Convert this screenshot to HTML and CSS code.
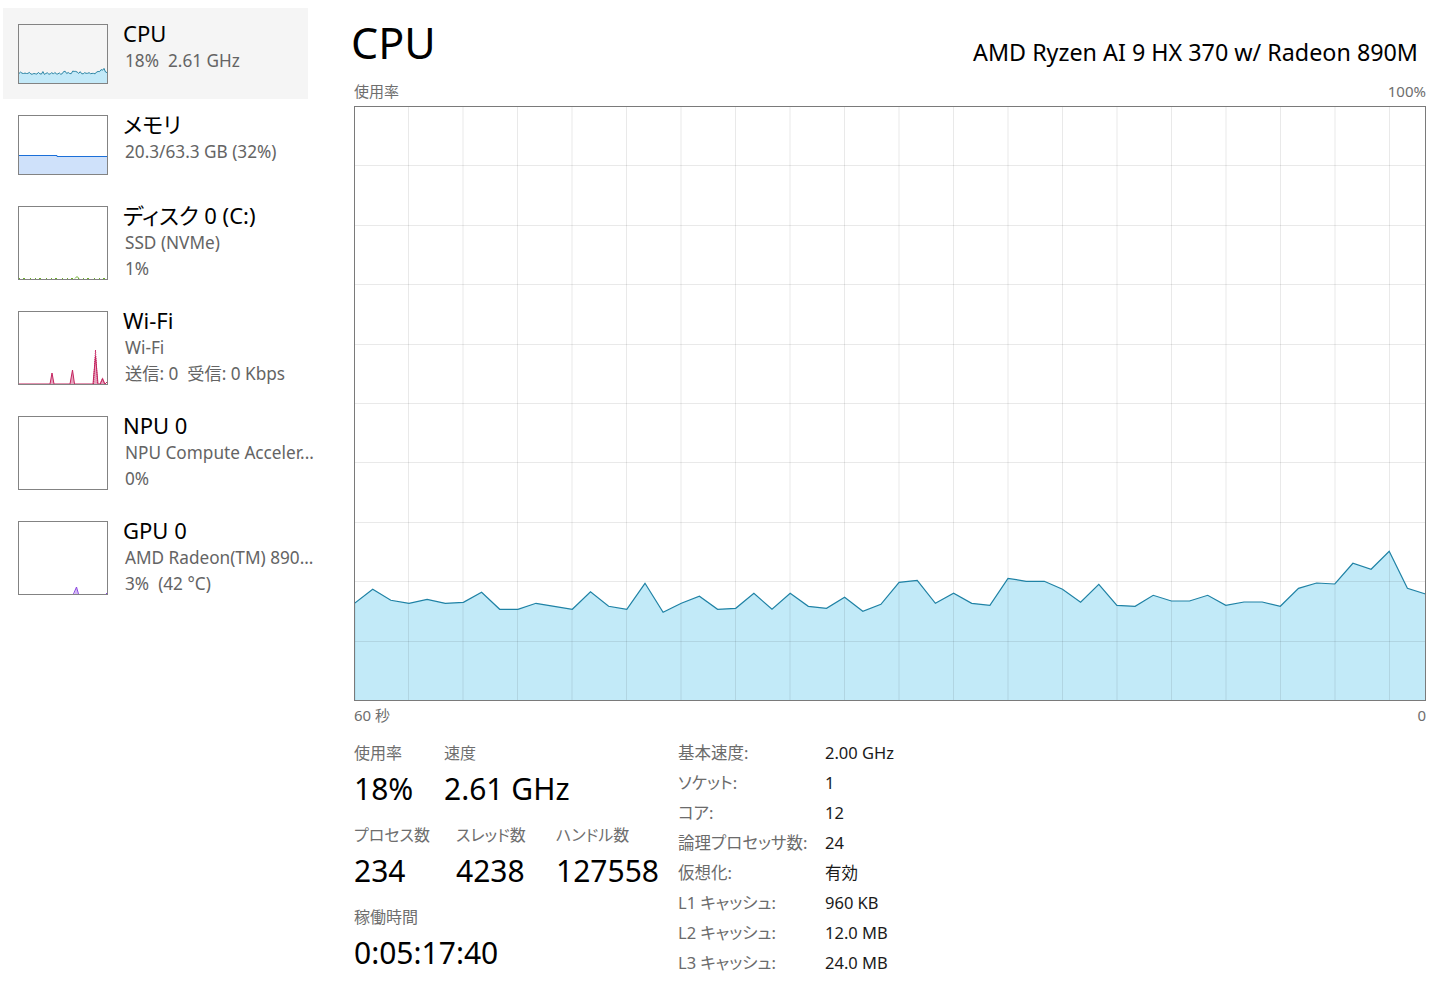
FILE: index.html
```html
<!DOCTYPE html>
<html lang="ja">
<head>
<meta charset="utf-8">
<title>タスク マネージャー - CPU</title>
<link rel="stylesheet" href="styles.css">
</head>
<body>
<div class="app">
  <aside class="sidebar">
    <div class="item selected">
      <svg class="thumb" width="90" height="60" viewBox="0 0 90 60">
        <polygon class="cpu-fill" points="1,49.5 2.5,48.1 4,49.2 5.5,49.5 7,49.1 8.5,49.5 9.9,49.4 11.4,48.4 12.9,50.1 14.4,50.1 15.9,49.5 17.4,49.8 18.9,50.1 20.4,48.4 21.9,49.8 23.4,50.1 24.9,47.6 26.4,50.4 27.8,49.5 29.3,48.8 30.8,50.1 32.3,50 33.8,48.5 35.3,50.1 36.8,48.5 38.3,49.8 39.8,50 41.3,48.9 42.8,50.3 44.3,49.6 45.7,47.5 47.2,47.3 48.7,49.5 50.2,48.5 51.7,49.5 53.2,49.7 54.7,47.1 56.2,47.4 57.7,47.4 59.2,48.1 60.7,49.4 62.2,47.7 63.7,49.7 65.2,49.8 66.6,48.7 68.1,49.3 69.6,49.3 71.1,48.7 72.6,49.7 74.1,49.4 75.6,49.4 77.1,49.8 78.6,48 80.1,47.5 81.6,47.6 83.1,45.6 84.6,46.2 86,44.4 87.5,48 89,48.6 89,59 1,59"/>
        <polyline class="cpu-line" points="1,49.5 2.5,48.1 4,49.2 5.5,49.5 7,49.1 8.5,49.5 9.9,49.4 11.4,48.4 12.9,50.1 14.4,50.1 15.9,49.5 17.4,49.8 18.9,50.1 20.4,48.4 21.9,49.8 23.4,50.1 24.9,47.6 26.4,50.4 27.8,49.5 29.3,48.8 30.8,50.1 32.3,50 33.8,48.5 35.3,50.1 36.8,48.5 38.3,49.8 39.8,50 41.3,48.9 42.8,50.3 44.3,49.6 45.7,47.5 47.2,47.3 48.7,49.5 50.2,48.5 51.7,49.5 53.2,49.7 54.7,47.1 56.2,47.4 57.7,47.4 59.2,48.1 60.7,49.4 62.2,47.7 63.7,49.7 65.2,49.8 66.6,48.7 68.1,49.3 69.6,49.3 71.1,48.7 72.6,49.7 74.1,49.4 75.6,49.4 77.1,49.8 78.6,48 80.1,47.5 81.6,47.6 83.1,45.6 84.6,46.2 86,44.4 87.5,48 89,48.6"/>
        <rect class="frame" x="0.5" y="0.5" width="89" height="59"/>
      </svg>
      <div class="info">
        <div class="name">CPU</div>
        <div class="sub"><span class="sp">18%</span>2.61 GHz</div>
      </div>
    </div>

    <div class="item">
      <svg class="thumb" width="90" height="60" viewBox="0 0 90 60">
        <polygon class="mem-fill" points="1,40.5 39,40.5 39,41.5 89,41.5 89,59 1,59"/>
        <polyline class="mem-line" points="1,40.5 39,40.5 39,41.5 89,41.5"/>
        <rect class="frame" x="0.5" y="0.5" width="89" height="59"/>
      </svg>
      <div class="info">
        <div class="name">メモリ</div>
        <div class="sub">20.3/63.3 GB (32%)</div>
      </div>
    </div>

    <div class="item">
      <svg class="thumb" width="90" height="74" viewBox="0 0 90 74">
        <path class="disk-line" d="M1,72.5 H89"/>
        <polyline class="disk-bump" points="57,72.5 59,70.5 61,72.5"/>
        <rect class="frame" x="0.5" y="0.5" width="89" height="73"/>
      </svg>
      <div class="info">
        <div class="name">ディスク 0 (C:)</div>
        <div class="sub">SSD (NVMe)</div>
        <div class="sub">1%</div>
      </div>
    </div>

    <div class="item">
      <svg class="thumb" width="90" height="74" viewBox="0 0 90 74">
        <polygon class="wifi-fill" points="32,73 34,62 36,73"/>
        <polygon class="wifi-fill" points="52,73 54.5,59 56.5,73"/>
        <polygon class="wifi-fill" points="75,73 77.5,39 80,73"/>
        <polygon class="wifi-fill" points="82,73 84.5,66 87,73"/>
        <polyline class="wifi-dash" points="75.5,73 77.5,39 79.5,73"/>
        <polyline class="wifi-dash" points="82.5,73 84.5,67 86.5,73"/>
        <polyline class="wifi-line" points="1,73 32,73 34,62 36,73 52,73 54.5,59 56.5,73 75,73 77.5,45 80,73 82,73 84.5,68 87,73 89,71"/>
        <rect class="frame" x="0.5" y="0.5" width="89" height="73"/>
      </svg>
      <div class="info">
        <div class="name">Wi-Fi</div>
        <div class="sub">Wi-Fi</div>
        <div class="sub"><span class="sp">送信: 0</span>受信: 0 Kbps</div>
      </div>
    </div>

    <div class="item">
      <svg class="thumb" width="90" height="74" viewBox="0 0 90 74">
        <rect class="frame" x="0.5" y="0.5" width="89" height="73"/>
      </svg>
      <div class="info">
        <div class="name">NPU 0</div>
        <div class="sub">NPU Compute Acceler...</div>
        <div class="sub">0%</div>
      </div>
    </div>

    <div class="item">
      <svg class="thumb" width="90" height="74" viewBox="0 0 90 74">
        <polygon class="gpu-fill" points="56.5,73 58.5,66 60,73"/>
        <polyline class="gpu-line" points="55.5,73 58.5,66 60.5,73"/>
        <path class="gpu-line" d="M88,72.5 H89"/>
        <rect class="frame" x="0.5" y="0.5" width="89" height="73"/>
      </svg>
      <div class="info">
        <div class="name">GPU 0</div>
        <div class="sub">AMD Radeon(TM) 890...</div>
        <div class="sub"><span class="sp">3%</span>(42 °C)</div>
      </div>
    </div>
  </aside>

  <main class="detail">
    <header class="head">
      <h1 class="title">CPU</h1>
      <div class="model">AMD Ryzen AI 9 HX 370 w/ Radeon 890M</div>
    </header>

    <div class="axis axis-top"><span>使用率</span><span>100%</span></div>

    <svg class="chart" width="1072" height="595" viewBox="0 0 1072 595">
      <polygon class="chart-fill" points="0.5,497.3 18.7,483.3 36.8,494.3 55,497.3 73.1,493.3 91.3,497.3 109.4,496.3 127.6,486.3 145.7,503.3 163.9,503.3 182,497.3 200.2,500.3 218.3,503.3 236.5,485.7 254.6,500.3 272.8,503.3 291,477.3 309.1,506.3 327.3,497.3 345.4,490.3 363.6,503.3 381.7,502.3 399.9,487.3 418,503.3 436.2,487.3 454.3,500.3 472.5,502.3 490.6,491.3 508.8,505.3 526.9,498.3 545.1,476.3 563.2,474.3 581.4,497.3 599.6,487.3 617.7,497.3 635.9,499.3 654,472.3 672.2,475.3 690.3,475.3 708.5,483.3 726.6,496.3 744.8,478.3 762.9,499.3 781.1,500.3 799.2,489.3 817.4,495 835.5,495 853.7,489.3 871.8,499.3 890,496 908.2,496 926.3,500.3 944.5,482.3 962.6,477 980.8,478 998.9,457.3 1017.1,463.3 1035.2,445.3 1053.4,482.3 1071.5,488 1071.5,594.5 0.5,594.5"/>
      <path class="chart-grid" d="M1,59.5 H1071 M1,119.5 H1071 M1,178.5 H1071 M1,238.5 H1071 M1,297.5 H1071 M1,356.5 H1071 M1,416.5 H1071 M1,475.5 H1071 M1,535.5 H1071 M54.5,1 V594 M109,1 V594 M163.5,1 V594 M218,1 V594 M272.5,1 V594 M327,1 V594 M381.5,1 V594 M436,1 V594 M490.5,1 V594 M545,1 V594 M599.5,1 V594 M654,1 V594 M708.5,1 V594 M763,1 V594 M817.5,1 V594 M872,1 V594 M926.5,1 V594 M981,1 V594 M1035.5,1 V594"/>
      <polyline class="chart-line" points="0.5,594 0.5,497.3 18.7,483.3 36.8,494.3 55,497.3 73.1,493.3 91.3,497.3 109.4,496.3 127.6,486.3 145.7,503.3 163.9,503.3 182,497.3 200.2,500.3 218.3,503.3 236.5,485.7 254.6,500.3 272.8,503.3 291,477.3 309.1,506.3 327.3,497.3 345.4,490.3 363.6,503.3 381.7,502.3 399.9,487.3 418,503.3 436.2,487.3 454.3,500.3 472.5,502.3 490.6,491.3 508.8,505.3 526.9,498.3 545.1,476.3 563.2,474.3 581.4,497.3 599.6,487.3 617.7,497.3 635.9,499.3 654,472.3 672.2,475.3 690.3,475.3 708.5,483.3 726.6,496.3 744.8,478.3 762.9,499.3 781.1,500.3 799.2,489.3 817.4,495 835.5,495 853.7,489.3 871.8,499.3 890,496 908.2,496 926.3,500.3 944.5,482.3 962.6,477 980.8,478 998.9,457.3 1017.1,463.3 1035.2,445.3 1053.4,482.3 1071.5,488"/>
      <rect class="chart-frame" x="0.5" y="0.5" width="1071" height="594"/>
    </svg>

    <div class="axis axis-bottom"><span>60 秒</span><span>0</span></div>

    <section class="stats">
      <div class="dyn">
        <div class="row">
          <div class="cell w90"><div class="lab">使用率</div><div class="val">18%</div></div>
          <div class="cell"><div class="lab">速度</div><div class="val">2.61 GHz</div></div>
        </div>
        <div class="row">
          <div class="cell w102"><div class="lab">プロセス数</div><div class="val">234</div></div>
          <div class="cell w100"><div class="lab">スレッド数</div><div class="val">4238</div></div>
          <div class="cell"><div class="lab">ハンドル数</div><div class="val">127558</div></div>
        </div>
        <div class="row">
          <div class="cell"><div class="lab">稼働時間</div><div class="val">0:05:17:40</div></div>
        </div>
      </div>
      <dl class="props">
        <dt>基本速度:</dt><dd>2.00 GHz</dd>
        <dt>ソケット:</dt><dd>1</dd>
        <dt>コア:</dt><dd>12</dd>
        <dt>論理プロセッサ数:</dt><dd>24</dd>
        <dt>仮想化:</dt><dd>有効</dd>
        <dt>L1 キャッシュ:</dt><dd>960 KB</dd>
        <dt>L2 キャッシュ:</dt><dd>12.0 MB</dd>
        <dt>L3 キャッシュ:</dt><dd>24.0 MB</dd>
      </dl>
    </section>
  </main>
</div>
</body>
</html>
```

FILE: styles.css
```css
html, body {
  margin: 0;
  padding: 0;
  background: #ffffff;
}

body {
  font-family: "Noto Sans", "Noto Sans CJK JP", sans-serif;
  font-feature-settings: "palt";
  color: #1a1a1a;
}

.app {
  display: flex;
  width: 1440px;
  height: 999px;
  overflow: hidden;
}

/* ---------- sidebar ---------- */
.sidebar {
  flex: none;
  width: 305px;
  margin-left: 3px;
  padding-top: 8px;
}

.item {
  display: flex;
  align-items: flex-start;
  gap: 15px;
  padding: 10px 0 0 15px;
}

.item.selected {
  background: #f5f5f5;
}

.thumb {
  display: block;
  flex: none;
  margin-top: 6px;
  margin-bottom: 15px;
}

.frame {
  fill: none;
  stroke: #838383;
  stroke-width: 1;
}

.cpu-fill { fill: #c3e9f8; }
.cpu-line { fill: none; stroke: #2a84a4; stroke-width: 1; }
.mem-fill { fill: #cfe1fa; }
.mem-line { fill: none; stroke: #1b6fd8; stroke-width: 1; }
.disk-line { fill: none; stroke: #6cae2a; stroke-width: 1; stroke-dasharray: 1 3 2 5 1 4; }
.disk-bump { fill: none; stroke: #6cae2a; stroke-width: 1; }
.wifi-fill { fill: #e6a2bd; }
.wifi-dash { fill: none; stroke: #c4245f; stroke-width: 1; stroke-dasharray: 1 1; }
.wifi-line { fill: none; stroke: #c4245f; stroke-width: 1; }
.gpu-fill { fill: #d2b8f3; }
.gpu-line { fill: none; stroke: #8a45e0; stroke-width: 1; }

.info {
  min-width: 0;
}

.name {
  font-size: 22px;
  line-height: 30px;
  color: #000000;
  white-space: nowrap;
}

.sub {
  padding-left: 2px;
  font-size: 17.2px;
  line-height: 26px;
  color: #646464;
  white-space: nowrap;
}

.sp {
  margin-right: 9px;
}

/* ---------- detail ---------- */
.detail {
  flex: none;
  width: 1072px;
  margin-left: 46px;
  padding-top: 13px;
}

.head {
  display: flex;
  justify-content: space-between;
  align-items: flex-start;
  height: 60px;
  padding-right: 8px;
}

.title {
  margin: 0 0 0 -3px;
  font-size: 43px;
  line-height: 60px;
  font-weight: 400;
  color: #000000;
}

.model {
  padding-top: 24px;
  font-size: 23.3px;
  line-height: 30px;
  color: #000000;
  white-space: nowrap;
}

.axis {
  display: flex;
  justify-content: space-between;
  font-size: 15px;
  line-height: 18px;
  color: #6e6e6e;
}

.axis-top {
  margin-top: 9px;
  margin-bottom: 6px;
}

.axis-bottom {
  margin-top: 5px;
}

.chart {
  display: block;
}

.chart-fill { fill: #c2eaf8; }
.chart-grid { fill: none; stroke: #000000; stroke-opacity: 0.085; stroke-width: 1; }
.chart-line { fill: none; stroke: #1f82a5; stroke-width: 1.2; stroke-linejoin: miter; }
.chart-frame { fill: none; stroke: #7a7a7a; stroke-width: 1; }

/* ---------- stats ---------- */
.stats {
  display: flex;
  align-items: flex-start;
  margin-top: 14px;
}

.dyn {
  flex: none;
  width: 324px;
  padding-top: 4px;
}

.row {
  display: flex;
}

.w90 { width: 90px; }
.w102 { width: 102px; }
.w100 { width: 100px; }

.lab {
  font-size: 16px;
  line-height: 22px;
  color: #6e6e6e;
  white-space: nowrap;
}

.val {
  padding-top: 3px;
  margin-bottom: 13px;
  font-size: 30px;
  line-height: 44px;
  color: #000000;
  white-space: nowrap;
}

.props {
  display: grid;
  grid-template-columns: 147px auto;
  margin: 0;
  font-size: 16.5px;
  line-height: 30px;
}

.props dt {
  color: #6b6b6b;
  white-space: nowrap;
}

.props dd {
  margin: 0;
  color: #1a1a1a;
  white-space: nowrap;
}
```
